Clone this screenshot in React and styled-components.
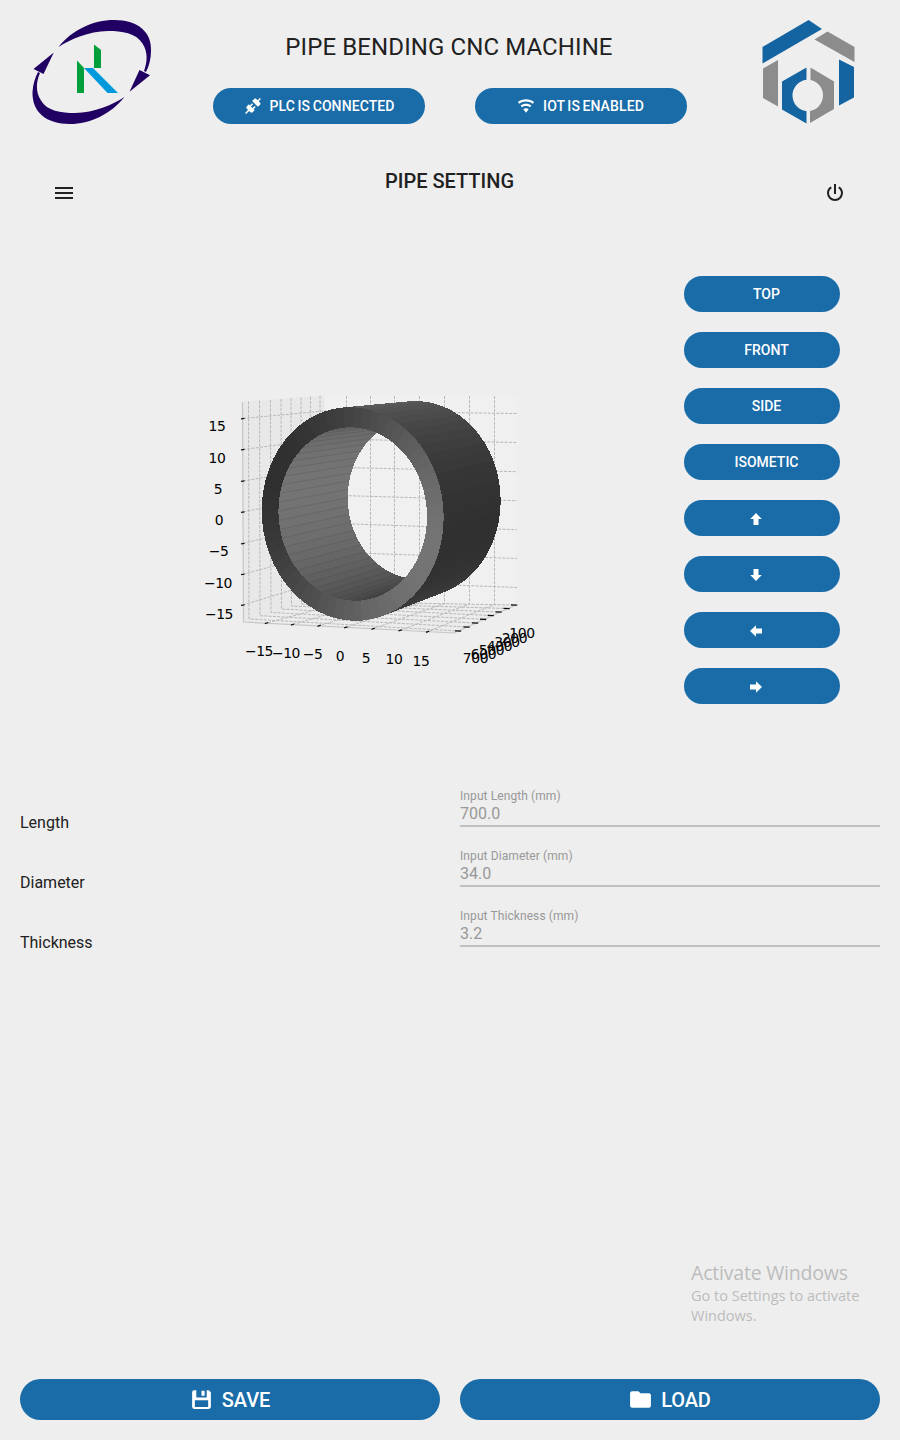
import React from 'react';
import styled, { createGlobalStyle } from 'styled-components';

const GlobalStyle = createGlobalStyle`
  * { box-sizing: border-box; }
  body {
    margin: 0;
    background: #eeeeee;
    color: #212121;
    font-family: Roboto, "Liberation Sans", sans-serif;
  }
  svg { display: block; flex: none; }
`;

const Screen = styled.div`
  width: 900px;
  height: 1440px;
  display: flex;
  flex-direction: column;
  background: #eeeeee;
  overflow: hidden;
`;

const Header = styled.header`
  height: 144px;
  padding: 14px 38px 0 26px;
  display: flex;
`;

const HeaderCenter = styled.div`
  width: 474px;
  margin: 0 71px 0 55px;
  display: flex;
  flex-direction: column;
  align-items: center;
`;

const Title = styled.h1`
  margin: 17px 2px 25px 0;
  height: 32px;
  line-height: 32px;
  font-size: 24px;
  font-weight: 400;
  letter-spacing: 0.1px;
  white-space: nowrap;
`;

const StatusRow = styled.div`
  display: flex;
  gap: 50px;
`;

const Pill = styled.button`
  border: 0;
  margin: 0;
  padding: 0;
  height: ${(p) => p.$h || 36}px;
  width: ${(p) => p.$w}px;
  border-radius: 21px;
  background: #1a6ca8;
  color: #fff;
  display: flex;
  align-items: center;
  justify-content: center;
  gap: ${(p) => p.$gap || 8}px;
  font: 500 ${(p) => p.$size || 14}px/1 Roboto, sans-serif;
  letter-spacing: ${(p) => p.$track || 0}px;
  word-spacing: ${(p) => p.$words || 0}px;
  padding-left: ${(p) => p.$nudge || 0}px;
  padding-right: ${(p) => p.$back || 0}px;
  padding-top: ${(p) => p.$drop || 0}px;
  white-space: nowrap;
`;

const Toolbar = styled.nav`
  height: 92px;
  padding: 25px 53px 0 52px;
  display: flex;
  justify-content: space-between;
`;

const PageTitle = styled.h2`
  margin: 0;
  font-size: 20px;
  line-height: 24px;
  font-weight: 500;
`;

const ToolIcon = styled.div`
  padding-top: 12px;
`;

const Viewer = styled.section`
  height: 544px;
  padding: 40px 60px 0 180px;
  display: flex;
  justify-content: space-between;
`;

const PlotArea = styled.div`
  padding-top: 104px;
`;

const ViewButtons = styled.div`
  display: flex;
  flex-direction: column;
  gap: 20px;
`;

const Form = styled.section`
  padding: 0 20px;
`;

const Field = styled.div`
  display: grid;
  grid-template-columns: 420px 420px;
  column-gap: 20px;
  height: 60px;
`;

const FieldName = styled.div`
  font-size: 16px;
  line-height: 20px;
  padding-top: 33px;
`;

const Input = styled.div`
  height: 47px;
  border-bottom: 2px solid #c0c0c0;
  padding-top: 8px;
  color: #989898;
`;

const Hint = styled.div`
  font-size: 12px;
  line-height: 16px;
  letter-spacing: 0.09px;
`;

const Value = styled.div`
  font-size: 16px;
  line-height: 20px;
`;

const Watermark = styled.aside`
  margin: 300px 0 0 691px;
  color: #bcbcbc;
  font-family: "Open Sans", "Noto Sans", sans-serif;
  white-space: nowrap;
`;

const WatermarkTitle = styled.div`
  font-size: 19.5px;
  line-height: 26px;
  letter-spacing: -0.2px;
`;

const WatermarkText = styled.div`
  font-size: 14.5px;
  line-height: 20px;
`;

const Footer = styled.footer`
  margin-top: auto;
  padding: 0 20px 20px;
  display: flex;
  gap: 20px;
`;

const ICONS = {
  connection:
    'M21.4 7.5C22.2 8.3 22.2 9.6 21.4 10.3L18.6 13.1L10.8 5.3L13.6 2.5C14.4 1.7 15.7 1.7 16.4 2.5L18.2 4.3L21.2 1.3L22.6 2.7L19.6 5.7L21.4 7.5M15.6 13.3L14.2 11.9L11.4 14.7L9.3 12.6L12.1 9.8L10.7 8.4L7.9 11.2L6.4 9.8L3.6 12.6C2.8 13.4 2.8 14.7 3.6 15.4L5.4 17.2L1.4 21.2L2.8 22.6L6.8 18.6L8.6 20.4C9.4 21.2 10.7 21.2 11.4 20.4L14.2 17.6L12.8 16.2L15.6 13.3Z',
  wifi:
    'M12,21L15.6,16.2C14.6,15.45 13.35,15 12,15C10.65,15 9.4,15.45 8.4,16.2L12,21M12,3C7.95,3 4.21,4.34 1.2,6.6L3,9C5.5,7.12 8.62,6 12,6C15.38,6 18.5,7.12 21,9L22.8,6.6C19.79,4.34 16.05,3 12,3M12,9C9.3,9 6.81,9.89 4.8,11.4L6.6,13.8C8.1,12.67 9.97,12 12,12C14.03,12 15.9,12.67 17.4,13.8L19.2,11.4C17.19,9.89 14.7,9 12,9Z',
  menu: 'M3,6H21V8H3V6M3,11H21V13H3V11M3,16H21V18H3V16Z',
  power:
    'M16.56,5.44L15.11,6.89C16.84,7.94 18,9.83 18,12A6,6 0 0,1 12,18A6,6 0 0,1 6,12C6,9.83 7.16,7.94 8.88,6.88L7.44,5.44C5.36,6.88 4,9.28 4,12A8,8 0 0,0 12,20A8,8 0 0,0 20,12C20,9.28 18.64,6.88 16.56,5.44M13,3H11V13H13',
  folder:
    'M10,4H4C2.89,4 2,4.89 2,6V18A2,2 0 0,0 4,20H20A2,2 0 0,0 22,18V8C22,6.89 21.1,6 20,6H12L10,4Z',
  save:
    'M5,3H7V10H17V3H19L21,5V19A2,2 0 0,1 19,21H5A2,2 0 0,1 3,19V5A2,2 0 0,1 5,3M5.600,12.700V19.300H18.400V12.700H5.600M12,3.600H15V8.500H12V3.600Z',
};

const Icon = ({ name, size = 24 }) => (
  <svg width={size} height={size} viewBox="0 0 24 24" fill="currentColor">
    <path d={ICONS[name]} fillRule="evenodd" />
  </svg>
);

const Arrow = ({ turn }) => (
  <svg width="12" height="12" viewBox="-6 -6 12 12" fill="#fff">
    <path d="M0-6L5.8 0H2.5V6H-2.5V0H-5.8Z" transform={`rotate(${turn})`} />
  </svg>
);

const OrbitLogo = () => (
  <svg width="132" height="116" viewBox="26 14 132 116">
    <g fill="#200062">
      <path d="M58.5 47C72 30 93 20 114 20C139 20 152 33 151 51C151 59 149 66 146 72L144 71C147.500 62 148 52 142.500 43.500C136 33 122 31 108 31C88 31.500 71 39 58.5 47Z" />
      <path d="M139.500 70L150 75.300L129.500 91.800Z" />
      <path d="M124.500 97C111 114 90 124 70 124C46 124 32 112 32.500 92C33 84 35 78 38 72L40 73C36 82 35.500 92 41 100.500C47 111 61 113 75 113C95 112.500 112 105 124.500 97Z" />
      <path d="M53.800 52.500L43.500 74L33.500 69Z" />
    </g>
    <path fill="#009f3c" d="M94 44.500L101 50V68H94ZM77 60.500L84 68V93H77Z" />
    <path fill="#0099dc" d="M84 68H93L118 93H107.500Z" />
  </svg>
);

const HexLogo = () => (
  <svg width="104" height="116" viewBox="758 14 104 116">
    <g fill="#1464a2">
      <path d="M808.600 20L822 29L762.500 63.500V47Z" />
      <path d="M839 59.500L854 67V97.500L839 105.500Z" />
      <path d="M806.500 67.500V79.800A15.800 15.800 0 0 0 806.500 111.200V123.500L782 109.500V81.500Z" />
    </g>
    <g fill="#8c8c8c">
      <path d="M827.500 31.500L854.500 47V62L814.500 39.500Z" />
      <path d="M778 60V106.500L763 98V68.500Z" />
      <path d="M810.500 67.500L834 81.500V109L810 123V111A15.800 15.800 0 0 0 810.500 80Z" />
    </g>
  </svg>
);

const SEGMENTS = 60;
const FRONT = { cx: 352.7, cy: 514, k: 0.038, outer: [91, 106.8], inner: [74.3, 86.7] };
const BACK = { cx: 417, cy: 499, k: 0.02, outer: [83.7, 98], inner: [69.3, 80] };

const ringPoint = (ring, kind, a) => {
  const [rx, ry] = ring[kind];
  const dx = rx * Math.cos(a);
  return [ring.cx + dx, ring.cy - ry * Math.sin(a) + ring.k * dx];
};

const area = (pts) =>
  pts.reduce((sum, [x, y], i) => {
    const [nx, ny] = pts[(i + 1) % pts.length];
    return sum + x * ny - nx * y;
  }, 0);

const shade = (a, sign, phase) => {
  const v = Math.round(82 + sign * 34 * Math.cos(a + phase));
  return `rgb(${v},${v},${v})`;
};

const join = (pts) => pts.map((p) => p.map((n) => n.toFixed(2)).join(',')).join(' ');

const buildPipe = () => {
  const inner = [];
  const outer = [];
  const face = [];
  for (let i = 0; i < SEGMENTS; i += 1) {
    const a = (i / SEGMENTS) * Math.PI * 2;
    const b = ((i + 1) / SEGMENTS) * Math.PI * 2;
    const m = (a + b) / 2;
    const wall = (kind) => [
      ringPoint(FRONT, kind, a),
      ringPoint(FRONT, kind, b),
      ringPoint(BACK, kind, b),
      ringPoint(BACK, kind, a),
    ];
    const out = wall('outer');
    const inn = wall('inner');
    if (area(out) > 0) outer.push({ pts: out, fill: shade(m, -1, 0.26) });
    if (area(inn) < 0) inner.push({ pts: inn, fill: shade(m, -1, 0.26), line: true });
    face.push({
      pts: [
        ringPoint(FRONT, 'outer', a),
        ringPoint(FRONT, 'outer', b),
        ringPoint(FRONT, 'inner', b),
        ringPoint(FRONT, 'inner', a),
      ],
      fill: shade(m, 1, 0.42),
    });
  }
  return [...inner, ...outer, ...face];
};

const PIPE = buildPipe();

const LEFT_Y = [418.5, 449.5, 481, 512, 543.5, 574.3, 605];
const CORNER_Y = [411, 439, 467, 495, 523, 552, 580];
const RIGHT_Y = [413.5, 442.5, 471.7, 500.7, 529.7, 558.5, 587.5];
const BACK_X = [346.5, 370.5, 394.5, 419.5, 444.5, 469.5, 494.5];
const FRONT_TICKS = [[266.7, 623], [292.7, 624.5], [319.3, 625.7], [346, 627.3], [373.3, 628.7], [400.3, 630.3], [427.7, 631.7]];
const DEPTH_LEFT = [[249, 619], [260, 615.7], [271, 612.5], [281.5, 609], [291.5, 606], [301.5, 604], [311, 602.5], [320.5, 601.5]];
const DEPTH_RIGHT = [[458, 631], [466.5, 627], [475, 623], [483, 619.3], [490.7, 615.5], [498.5, 612], [506.5, 608.5], [514, 605]];

const LABELS = [
  ['15', 217.5, 431], ['10', 217.5, 463], ['5', 218.5, 494], ['0', 219.5, 525], ['−5', 219, 556], ['−10', 218.5, 588], ['−15', 219.5, 619],
  ['−15', 259.5, 656], ['−10', 286.5, 658], ['−5', 313, 659], ['0', 340.5, 661], ['5', 366.5, 663], ['10', 394.5, 664], ['15', 421.5, 666],
  ['700', 476, 663], ['600', 484, 659], ['500', 492, 655], ['400', 500, 651], ['300', 507.5, 647], ['200', 515, 642.5], ['100', 522.5, 638],
];

const Plot = () => (
  <svg width="380" height="300" viewBox="180 380 380 300">
    <polygon points="242.500,402 324.500,395.500 324.500,601 243.500,622" fill="#e8e8e8" />
    <polygon points="324.500,395.500 517.500,397.500 516,605 324.500,601" fill="#f0f0f0" />
    <polygon points="243.500,622 324.500,601 516,605 454,633" fill="#ececec" />
    <g stroke="#b8b8b8" strokeWidth="1" fill="none" strokeDasharray="3 1.3">
      {LEFT_Y.map((y, i) => (
        <polyline key={y} points={`243,${y} 324.500,${CORNER_Y[i]} 517,${RIGHT_Y[i]}`} />
      ))}
      {BACK_X.map((x, i) => (
        <polyline key={x} points={`${x},396 ${x},${601.5 + i * 0.5} ${FRONT_TICKS[i].join(',')}`} />
      ))}
      {DEPTH_LEFT.map(([x, y], i) => (
        <polyline key={x} points={`${x - 0.5},${401.5 - i * 0.8} ${x},${y} ${DEPTH_RIGHT[i].join(',')}`} />
      ))}
    </g>
    <polyline points="242.500,402 243.500,622 454,633 516,605" fill="none" stroke="#c6c6c6" strokeWidth="1.2" />
    <g stroke="#111" strokeWidth="1.3">
      {LEFT_Y.map((y) => <line key={y} x1="241" y1={y + 0.3} x2="244.500" y2={y - 0.2} />)}
      {FRONT_TICKS.map(([x, y]) => <line key={x} x1={x - 1.8} y1={y + 0.6} x2={x + 1.5} y2={y - 0.5} />)}
      {DEPTH_RIGHT.map(([x, y]) => <line key={x} x1={x - 3} y1={y - 0.2} x2={x + 3.2} y2={y + 0.2} />)}
    </g>
    {PIPE.map((q, i) => (
      <g key={i}>
        <polygon points={join(q.pts)} fill={q.fill} shapeRendering="crispEdges" />
        {q.line && (
          <line x1={q.pts[0][0]} y1={q.pts[0][1]} x2={q.pts[3][0]} y2={q.pts[3][1]} stroke="#333" strokeOpacity="0.16" />
        )}
      </g>
    ))}
    <g fontFamily="DejaVu Sans, sans-serif" fontSize="13.900" letterSpacing="-0.4" textAnchor="middle" fill="#000">
      {LABELS.map(([t, x, y]) => <text key={`${t}-${x}`} x={x - 0.5} y={y}>{t}</text>)}
    </g>
  </svg>
);

const VIEWS = ['TOP', 'FRONT', 'SIDE', 'ISOMETIC'];
const TURNS = [0, 180, 270, 90];
const FIELDS = [
  ['Length', 'Input Length (mm)', '700.0'],
  ['Diameter', 'Input Diameter (mm)', '34.0'],
  ['Thickness', 'Input Thickness (mm)', '3.2'],
];

export default function App() {
  return (
    <Screen>
      <GlobalStyle />
      <Header>
        <OrbitLogo />
        <HeaderCenter>
          <Title>PIPE BENDING CNC MACHINE</Title>
          <StatusRow>
            <Pill $w={212} $words={-1} $track={0.08}><Icon name="connection" size={18} />PLC IS CONNECTED</Pill>
            <Pill $w={212} $words={-1.2} $track={0.12} $back={1}><Icon name="wifi" size={18} />IOT IS ENABLED</Pill>
          </StatusRow>
        </HeaderCenter>
        <HexLogo />
      </Header>
      <Toolbar>
        <ToolIcon><Icon name="menu" /></ToolIcon>
        <PageTitle>PIPE SETTING</PageTitle>
        <ToolIcon><Icon name="power" /></ToolIcon>
      </Toolbar>
      <Viewer>
        <PlotArea><Plot /></PlotArea>
        <ViewButtons>
          {VIEWS.map((v) => <Pill key={v} $w={156} $nudge={9}>{v}</Pill>)}
          {TURNS.map((t) => <Pill key={t} $w={156} $back={12} $drop={2}><Arrow turn={t} /></Pill>)}
        </ViewButtons>
      </Viewer>
      <Form>
        {FIELDS.map(([name, hint, value]) => (
          <Field key={name}>
            <FieldName>{name}</FieldName>
            <Input>
              <Hint>{hint}</Hint>
              <Value>{value}</Value>
            </Input>
          </Field>
        ))}
      </Form>
      <Watermark>
        <WatermarkTitle>Activate Windows</WatermarkTitle>
        <WatermarkText>Go to Settings to activate</WatermarkText>
        <WatermarkText>Windows.</WatermarkText>
      </Watermark>
      <Footer>
        <Pill $w={420} $h={41} $size={20} $track={-0.1} $back={1}><Icon name="save" size={25} />SAVE</Pill>
        <Pill $w={420} $h={41} $size={20} $track={-0.1} $back={1}><Icon name="folder" size={25} />LOAD</Pill>
      </Footer>
    </Screen>
  );
}
